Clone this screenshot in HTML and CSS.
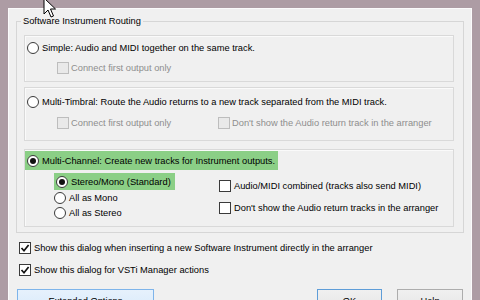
FILE: index.html
```html
<!DOCTYPE html>
<html lang="en">
<head>
  <meta charset="UTF-8" />
  <title>Software Instrument</title>
  <link rel="stylesheet" href="styles.css">
</head>
<body>

  <!-- Mouse pointer over the title bar -->
  <svg class="pointer" width="14" height="22" viewBox="0 0 14 22">
    <path d="M1 1 L1 17 L5 13 L8 20 L10.5 19 L7.5 12 L12.5 12 Z" fill="#fff" stroke="#000" stroke-width="1"/>
  </svg>

  <div class="window">

    <fieldset class="routing">
      <legend>Software Instrument Routing</legend>

      <!-- Simple -->
      <div class="mode mode-simple">
        <div class="opt"><span class="radio"></span>Simple: Audio and MIDI together on the same track.</div>
        <div class="sub">
          <div class="opt off"><span class="check"></span>Connect first output only</div>
        </div>
      </div>

      <!-- Multi-Timbral -->
      <div class="mode mode-timbral">
        <div class="opt"><span class="radio"></span>Multi-Timbral: Route the Audio returns to a new track separated from the MIDI track.</div>
        <div class="sub">
          <div class="opt off"><span class="check"></span>Connect first output only</div>
          <div class="opt off"><span class="check"></span>Don't show the Audio return track in the arranger</div>
        </div>
      </div>

      <!-- Multi-Channel -->
      <div class="mode mode-multi">
        <div class="opt hl head"><span class="radio on"></span>Multi-Channel: Create new tracks for Instrument outputs.</div>
        <div class="sub">
          <div class="col col-outputs">
            <div class="opt hl"><span class="radio on"></span>Stereo/Mono (Standard)</div>
            <div class="opt"><span class="radio"></span>All as Mono</div>
            <div class="opt"><span class="radio"></span>All as Stereo</div>
          </div>
          <div class="col col-flags">
            <div class="opt"><span class="check"></span>Audio/MIDI combined (tracks also send MIDI)</div>
            <div class="opt"><span class="check"></span>Don't show the Audio return tracks in the arranger</div>
          </div>
        </div>
      </div>
    </fieldset>

    <!-- Dialog options -->
    <div class="options">
      <div class="opt"><span class="check on"><svg width="10" height="10" viewBox="0 0 10 10"><path d="M1.5 5 L4 7.8 L8.6 2" fill="none" stroke="#111" stroke-width="1.7"/></svg></span>Show this dialog when inserting a new Software Instrument directly in the arranger</div>
      <div class="opt"><span class="check on"><svg width="10" height="10" viewBox="0 0 10 10"><path d="M1.5 5 L4 7.8 L8.6 2" fill="none" stroke="#111" stroke-width="1.7"/></svg></span>Show this dialog for VSTi Manager actions</div>
    </div>

    <!-- Buttons -->
    <div class="buttons">
      <button class="btn btn-extended">Extended Options</button>
      <button class="btn btn-ok">OK</button>
      <button class="btn btn-help">Help</button>
    </div>

  </div>

</body>
</html>
```

FILE: styles.css
```css
* {
  box-sizing: border-box;
}

html, body {
  margin: 0;
  height: 300px;
  overflow: hidden;
}

body {
  background: #ad9ca4;
  font-family: 'Liberation Sans', Arial, sans-serif;
  font-size: 9.3px;
  color: #000;
  position: relative;
}

.pointer {
  position: absolute;
  left: 43px;
  top: -3px;
  z-index: 5;
}

/* Dialog body */
.window {
  margin: 8px 8px 0 8px;
  height: 292px;
  padding: 7px 8px 0 8px;
  background: #f0f0f0;
  box-shadow: inset 1px 1px 0 #fbfbfb, inset -1px 0 0 #fbfbfb;
}

/* Group box */
.routing {
  margin: 0;
  min-width: 0;
  border: 1px solid #d6d6d6;
  padding: 8px 9px 5px 7px;
}

.routing legend {
  margin-left: -3px;
  padding: 0 2px;
  line-height: 12px;
}

.mode {
  border: 1px solid #d9d9d9;
  box-shadow: inset 1px 1px 0 #fafafa;
}

.mode-simple {
  padding: 6px 0 7px 2px;
}

.mode-timbral {
  margin-top: 5px;
  padding: 8px 0 11px 2px;
}

.mode-multi {
  margin-top: 8px;
  padding: 1px 0 6px 0;
}

/* Option rows */
.opt {
  display: flex;
  align-items: center;
  height: 12px;
  line-height: 12px;
  white-space: nowrap;
}

.opt.off {
  color: #8e8e8e;
}

.radio {
  width: 12px;
  height: 12px;
  margin-right: 3px;
  border: 1px solid #3a3a3a;
  border-radius: 50%;
  background: #fff;
  display: flex;
  align-items: center;
  justify-content: center;
  flex: none;
}

.radio.on::after {
  content: '';
  width: 6px;
  height: 6px;
  border-radius: 50%;
  background: #111;
}

.check {
  width: 12px;
  height: 12px;
  margin-right: 3px;
  border: 1px solid #3a3a3a;
  background: #fff;
  display: flex;
  align-items: center;
  justify-content: center;
  flex: none;
}

.opt.off .check {
  border-color: #bdbdbd;
  background: #e9e9e9;
  margin-right: 2px;
}

.sub {
  display: grid;
  grid-template-columns: 161px auto;
  padding-left: 30px;
}

.mode-simple .sub {
  margin-top: 8px;
}

.mode-timbral .sub {
  margin-top: 9px;
}

/* Multi-Channel box */
.hl {
  background: #8bcf86;
}

.opt.head {
  display: inline-flex;
  height: 19px;
  padding: 0 3px 0 2px;
}

.mode-multi .sub {
  margin-top: 3px;
  padding-left: 29px;
  grid-template-columns: 165px auto;
}

.col-outputs .opt {
  height: 15px;
}

.col-outputs .opt.hl {
  display: inline-flex;
  height: 17px;
  padding: 0 4px 0 2px;
}

.col-flags {
  padding-top: 7px;
  display: flex;
  flex-direction: column;
  gap: 10px;
}

/* Dialog options */
.options {
  margin-top: 9px;
  padding-left: 3px;
  display: flex;
  flex-direction: column;
  gap: 10px;
}

/* Buttons */
.buttons {
  display: flex;
  margin-top: 13px;
  padding: 0 1px;
}

.btn {
  height: 23px;
  font-family: inherit;
  font-size: 9.3px;
  color: #000;
  border: 1px solid #adadad;
  background: linear-gradient(#f0f0f0, #e5e5e5);
  padding: 0;
}

.btn-extended {
  width: 137px;
  border-color: #7eb4ea;
  background: linear-gradient(#e6f1fc, #d9eafb);
}

.btn-ok {
  width: 65px;
  margin-left: auto;
  border-color: #5e9dd8;
}

.btn-help {
  width: 66px;
  margin-left: 15px;
}
```
